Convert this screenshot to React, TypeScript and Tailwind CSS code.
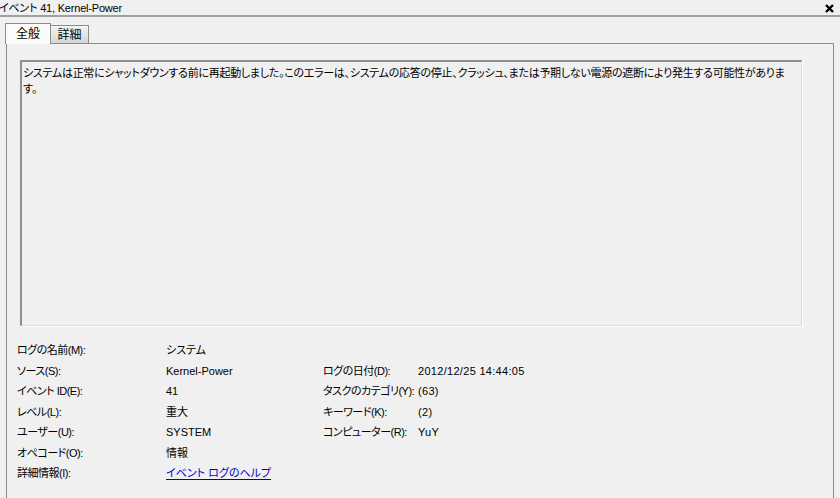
const FONT = "font-['Liberation_Sans','Noto_Sans_CJK_JP',sans-serif] [font-feature-settings:'palt']";

type Row = { label: string; value: React.ReactNode; label2?: string; value2?: string };

const ROWS: Row[] = [
  { label: "ログの名前(M):", value: "システム" },
  { label: "ソース(S):", value: "Kernel-Power", label2: "ログの日付(D):", value2: "2012/12/25 14:44:05" },
  { label: "イベント ID(E):", value: "41", label2: "タスクのカテゴリ(Y):", value2: "(63)" },
  { label: "レベル(L):", value: "重大", label2: "キーワード(K):", value2: "(2)" },
  { label: "ユーザー(U):", value: "SYSTEM", label2: "コンピューター(R):", value2: "YuY" },
  { label: "オペコード(O):", value: "情報" },
  {
    label: "詳細情報(I):",
    value: <span className="text-[#0000cc] underline underline-offset-2">イベント ログのヘルプ</span>,
  },
];

export default function App() {
  return (
    <div className={`w-[840px] h-[498px] overflow-hidden bg-[#f0f0f0] text-[11px] leading-[16px] text-black ${FONT}`}>
      {/* title bar */}
      <div className="flex h-[17px] items-center justify-between border-b-2 border-[#a0a0a0] pr-[6px]">
        <span className="-ml-[1px] tracking-[-0.2px]">イベント 41, Kernel-Power</span>
        <svg width="9" height="9" viewBox="0 0 9 9" className="mt-[1px]">
          <path d="M1 1 L8 8 M8 1 L1 8" stroke="#000" strokeWidth="2.4" />
        </svg>
      </div>

      {/* tabs */}
      <div className="mt-[6px] flex items-end pl-[5px]">
        <div className="relative z-10 -mb-[1px] flex h-[21px] w-[46px] items-start justify-center border border-b-0 border-[#8c8c8c] bg-[#fbfbfb] pt-[2px] text-[12px]">
          全般
        </div>
        <div className="flex h-[18px] w-[38px] items-start justify-center border border-b-0 border-l-0 border-[#8c8c8c] bg-linear-to-b from-[#f4f4f4] to-[#d6d6d6] pt-[1px] text-[12px]">
          詳細
        </div>
      </div>

      {/* panel */}
      <div className="ml-[6px] h-[460px] w-[828px] border border-[#8c8c8c] bg-[#f0f0f0]">
        <div className="ml-[13px] mt-[16px] h-[266px] w-[782px] border-t-2 border-l-2 border-r border-b border-t-[#8e8e8e] border-l-[#8e8e8e] border-r-[#dcdcdc] border-b-[#dcdcdc] bg-[#f0f0f0] px-[1px] pt-[3px] shadow-[1px_1px_0_#ffffff]">
          <p className="whitespace-nowrap tracking-[-0.28px]">
            システムは正常にシャットダウンする前に再起動しました。このエラーは、システムの応答の停止、クラッシュ、または予期しない電源の遮断により発生する可能性がありま
          </p>
          <p>す。</p>
        </div>

        <div className="mt-[14px] grid grid-cols-[149px_157px_95px_1fr] pl-[10px]">
          {ROWS.map((r) => (
            <div key={r.label} className="contents">
              <div className="flex h-[20.5px] items-center whitespace-nowrap tracking-[-0.5px]">{r.label}</div>
              <div className="flex h-[20.5px] items-center whitespace-nowrap">{r.value}</div>
              <div className="flex h-[20.5px] items-center whitespace-nowrap tracking-[-0.5px]">{r.label2 ?? ""}</div>
              <div className="flex h-[20.5px] items-center whitespace-nowrap tracking-[0.3px]">{r.value2 ?? ""}</div>
            </div>
          ))}
        </div>
      </div>
    </div>
  );
}
